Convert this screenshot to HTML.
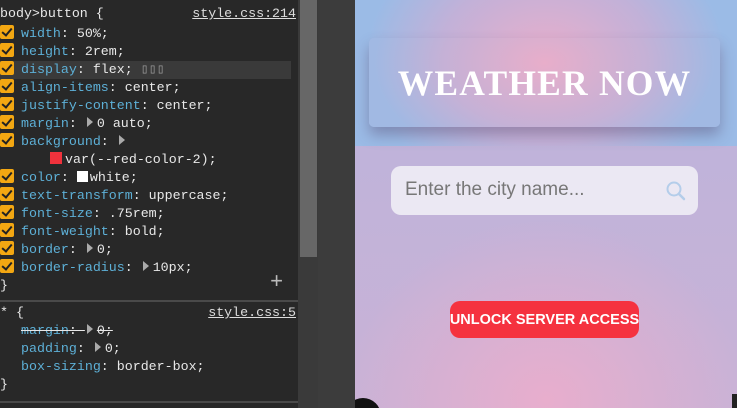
<!DOCTYPE html><html style="overflow:hidden;height:408px"><head><style>
body{margin:0;width:737px;height:408px;overflow:hidden;background:#282828;position:relative;font-family:"Liberation Mono",monospace}
.dt{position:absolute;left:0;top:0;width:298px;height:408px;background:#282828;font-size:13.3px;color:#e8e8e8;overflow:hidden}
.l{position:absolute;left:0;height:18px;line-height:18px;white-space:pre}
.p{color:#5db0d7}
.cb{display:inline-block;width:14px;height:14px;background:#f3a712;border-radius:2px;vertical-align:-2px;margin-right:7px;position:relative}
.cb:after{content:"";position:absolute;left:4px;top:1px;width:4px;height:8px;border:solid #222;border-width:0 2px 2px 0;transform:rotate(40deg)}
.tri{display:inline-block;width:0;height:0;border-left:6px solid #aaa;border-top:5px solid transparent;border-bottom:5px solid transparent;margin:0 4px 0 2px}
.lnk{position:absolute;right:2px;text-decoration:underline;color:#ddd}
.sep{position:absolute;left:0;width:298px;height:2px;background:#4a4a4a}
.page{position:absolute;left:355px;top:0;width:382px;height:408px;overflow:hidden;background:radial-gradient(ellipse 200px 180px at 50% 400px,#e8aecd,rgba(200,175,212,0) 100%),linear-gradient(#bab4dc,#c9b2d6)}
.band{position:absolute;left:0;top:0;width:382px;height:146px;background:radial-gradient(ellipse 180px 140px at 50% 60px,#e9aecb,#c2b1d8 60%,#9bbbe6)}
</style></head><body>
<div class="dt">
<div class="l" style="top:5px;left:0">body>button {</div><span class="lnk l" style="top:5px;left:auto">style.css:214</span>
<div class="l" style="left:0;width:291px;top:61px;background:#3a3a3a"></div>
<div class="l" style="top:25px"><span class="cb"></span><span class="p">width</span>: 50%;</div>
<div class="l" style="top:43px"><span class="cb"></span><span class="p">height</span>: 2rem;</div>
<div class="l" style="top:61px"><span class="cb"></span><span class="p">display</span>: flex; <span style="color:#999">▯▯▯</span></div>
<div class="l" style="top:79px"><span class="cb"></span><span class="p">align-items</span>: center;</div>
<div class="l" style="top:97px"><span class="cb"></span><span class="p">justify-content</span>: center;</div>
<div class="l" style="top:115px"><span class="cb"></span><span class="p">margin</span>: <span class="tri"></span>0 auto;</div>
<div class="l" style="top:133px"><span class="cb"></span><span class="p">background</span>: <span class="tri"></span></div>
<div class="l" style="top:151px;left:50px"><span style="display:inline-block;width:12px;height:12px;background:#f0323c;vertical-align:-1px;margin-right:3px"></span>var(--red-color-2);</div>
<div class="l" style="top:169px"><span class="cb"></span><span class="p">color</span>: <span style="display:inline-block;width:11px;height:11px;background:#fff;vertical-align:-1px;margin-right:2px"></span>white;</div>
<div class="l" style="top:187px"><span class="cb"></span><span class="p">text-transform</span>: uppercase;</div>
<div class="l" style="top:205px"><span class="cb"></span><span class="p">font-size</span>: .75rem;</div>
<div class="l" style="top:223px"><span class="cb"></span><span class="p">font-weight</span>: bold;</div>
<div class="l" style="top:241px"><span class="cb"></span><span class="p">border</span>: <span class="tri"></span>0;</div>
<div class="l" style="top:259px"><span class="cb"></span><span class="p">border-radius</span>: <span class="tri"></span>10px;</div>
<div class="l" style="top:277px">}</div>
<div class="l" style="top:274px;left:270px;font-size:22px;color:#bbb">+</div>
<div class="sep" style="top:300px"></div>
<div class="l" style="top:304px">* {</div><span class="lnk l" style="top:304px;left:auto">style.css:5</span>
<div class="l" style="top:322px;left:21px;text-decoration:line-through"><span class="p">margin</span>: <span class="tri"></span>0;</div>
<div class="l" style="top:340px;left:21px"><span class="p">padding</span>: <span class="tri"></span>0;</div>
<div class="l" style="top:358px;left:21px"><span class="p">box-sizing</span>: border-box;</div>
<div class="l" style="top:376px">}</div>
<div class="sep" style="top:401px"></div>
</div>
<div style="position:absolute;left:298px;top:0;width:20px;height:408px;background:#3a3a3a"></div>
<div style="position:absolute;left:300px;top:0;width:17px;height:257px;background:#676767"></div>
<div style="position:absolute;left:318px;top:0;width:37px;height:408px;background:#3c3c3c"></div>
<div class="page">
<div class="band"></div>
<div style="position:absolute;left:14px;top:38px;width:351px;height:89px;border-radius:5px;background:radial-gradient(ellipse 170px 110px at 50% 25px,#e8aeca,#c5b1d6 60%,#a1b9e3);box-shadow:0 8px 14px rgba(90,80,120,.45);display:flex;align-items:center;justify-content:center;color:#fff;font:bold 35.5px 'Liberation Serif',serif;letter-spacing:1.2px">WEATHER NOW</div>
<div style="position:absolute;left:36px;top:166px;width:307px;height:49px;border-radius:10px;background:#ebe8f3"></div>
<div style="position:absolute;left:50px;top:179px;font:19px 'Liberation Sans',sans-serif;color:#777">Enter the city name...</div>
<svg style="position:absolute;left:310px;top:180px" width="22" height="22" viewBox="0 0 22 22"><circle cx="9" cy="9" r="6.5" fill="none" stroke="#b4cdea" stroke-width="2"/><line x1="14" y1="14" x2="19" y2="19" stroke="#b4cdea" stroke-width="2.5" stroke-linecap="round"/></svg>
<div style="position:absolute;left:95px;top:301px;width:189px;height:37px;border-radius:10px;background:#f5323f;color:#fff;font:bold 14.5px 'Liberation Sans',sans-serif;display:flex;align-items:center;justify-content:center;white-space:nowrap">UNLOCK SERVER ACCESS</div>
<div style="position:absolute;left:-10px;top:398px;width:36px;height:36px;border-radius:50%;background:#111"></div>
<div style="position:absolute;left:377px;top:394px;width:5px;height:14px;background:#222"></div>
</div>
</body></html>
